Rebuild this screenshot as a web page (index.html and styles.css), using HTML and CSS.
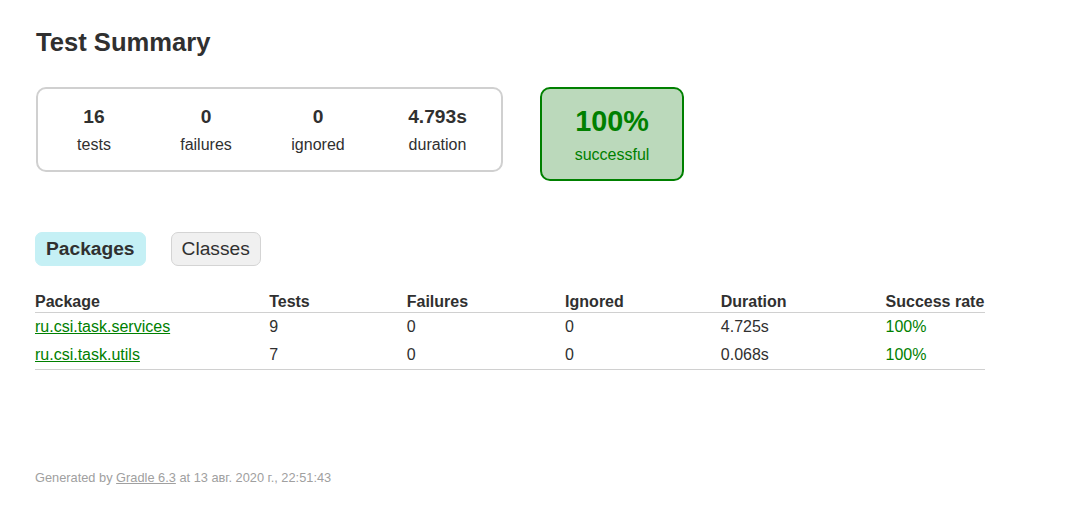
FILE: index.html
```html
<!DOCTYPE html>
<html>
<head>
<meta charset="utf-8">
<title>Test results - Test Summary</title>
<link rel="stylesheet" href="styles.css">
</head>
<body>
<div class="content">
  <h1 class="title">Test Summary</h1>
  <div class="summary">
    <div class="summary-group">
      <div class="info-box"><div class="counter">16</div><p>tests</p></div>
      <div class="info-box"><div class="counter">0</div><p>failures</p></div>
      <div class="info-box"><div class="counter">0</div><p>ignored</p></div>
      <div class="info-box info-duration"><div class="counter">4.793s</div><p>duration</p></div>
    </div>
    <div class="success-rate">
      <div class="info-box"><div class="percent">100%</div><p>successful</p></div>
    </div>
  </div>
  <ul class="tab-links">
    <li class="tab-link selected"><a href="#tab0">Packages</a></li>
    <li class="tab-link"><a href="#tab1">Classes</a></li>
  </ul>
  <div class="tab">
    <table class="results">
      <thead>
        <tr>
          <th class="col-name">Package</th>
          <th>Tests</th>
          <th>Failures</th>
          <th>Ignored</th>
          <th class="col-duration">Duration</th>
          <th>Success rate</th>
        </tr>
      </thead>
      <tbody>
        <tr>
          <td class="col-name ok"><a href="#">ru.csi.task.services</a></td>
          <td>9</td>
          <td>0</td>
          <td>0</td>
          <td class="col-duration">4.725s</td>
          <td class="ok">100%</td>
        </tr>
        <tr>
          <td class="col-name ok"><a href="#">ru.csi.task.utils</a></td>
          <td>7</td>
          <td>0</td>
          <td>0</td>
          <td class="col-duration">0.068s</td>
          <td class="ok">100%</td>
        </tr>
      </tbody>
    </table>
  </div>
  <div class="footer">
    <p>Generated by <a href="#">Gradle 6.3</a> at 13 авг. 2020 г., 22:51:43</p>
  </div>
</div>
</body>
</html>
```

FILE: styles.css
```css
html, body {
  margin: 0;
  padding: 0;
  background: #ffffff;
}

body {
  font-family: "Liberation Sans", Arial, sans-serif;
  font-size: 16px;
  color: #303030;
}

a {
  color: #303030;
}

.content {
  padding: 28px 35px 30px 35px;
}

.title {
  font-size: 25.6px;
  font-weight: bold;
  margin: 0 0 30px 1px;
  white-space: nowrap;
}

.summary {
  display: flex;
  align-items: flex-start;
  margin-top: 1px;
  margin-bottom: 41px;
  margin-left: 1px;
}

.summary-group {
  display: flex;
  border: solid 2px #d0d0d0;
  border-radius: 10px;
  padding: 2px 0 1px 0;
}

.summary-group .info-box {
  margin: 0 1px;
}

.info-box {
  width: 110px;
  padding: 15px 0;
  text-align: center;
}

.info-box p {
  margin: 0;
}

.info-duration {
  width: 125px;
}

.counter, .percent {
  font-size: 19.2px;
  font-weight: bold;
  margin-bottom: 8px;
}

.success-rate {
  width: 140px;
  margin-left: 37px;
  border: solid 2px #008000;
  border-radius: 10px;
  background-color: #bbd9bb;
  color: #008000;
  display: flex;
  justify-content: center;
}

.success-rate .info-box {
  padding-top: 16px;
  padding-bottom: 15px;
}

.success-rate .percent {
  font-size: 28.8px;
}

.tab-links {
  display: flex;
  list-style: none;
  padding: 10px 0;
  margin: 0 0 16px 0;
}

.tab-link {
  padding: 5px 10px;
  border-radius: 7px;
  margin-right: 25px;
  border: solid 1px #d4d4d4;
  background-color: #f0f0f0;
}

.tab-link.selected {
  background-color: #c5f0f5;
  border-color: #c5f0f5;
}

.tab-link a {
  font-size: 19.2px;
  display: block;
  text-decoration: none;
  color: #303030;
}

.tab-link.selected a {
  font-weight: bold;
}

.results {
  border-collapse: collapse;
  border-bottom: solid #d0d0d0 1px;
}

.results th {
  text-align: left;
  white-space: nowrap;
  padding: 1px 1px 1px 96px;
  border-bottom: solid #d0d0d0 1px;
}

.results td {
  white-space: nowrap;
  padding: 5px 1px 5px 96px;
}

.results th:first-child,
.results td:first-child {
  padding-left: 0;
}

.results .col-name,
.results .col-duration {
  padding-right: 3px;
}

.results .ok,
.results .ok a {
  color: #008000;
}

.footer {
  margin-top: 100px;
  font-size: 12.8px;
  white-space: nowrap;
  color: #a0a0a0;
}

.footer p {
  margin: 0;
}

.footer a {
  color: #a0a0a0;
}
```
